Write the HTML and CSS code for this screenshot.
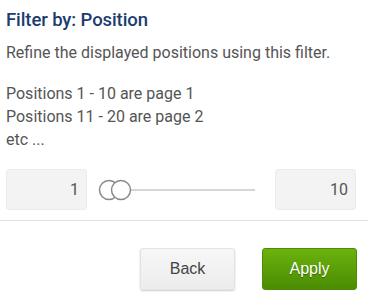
FILE: index.html
```html
<!DOCTYPE html>
<html>
<head>
<meta charset="utf-8">
<link rel="stylesheet" href="styles.css">
</head>
<body>
<div class="panel">
  <div class="content">
    <h2 class="title">Filter by: Position</h2>
    <p class="desc">Refine the displayed positions using this filter.</p>
    <p class="info">Positions 1 - 10 are page 1<br>Positions 11 - 20 are page 2<br>etc ...</p>
    <div class="range-row">
      <div class="num-box">1</div>
      <div class="slider">
        <svg width="160" height="26" viewBox="0 0 160 26">
          <line x1="30" y1="13" x2="158" y2="13" stroke="#c8c8c8" stroke-width="1.5"/>
          <circle cx="12" cy="13" r="9.5" fill="#fff" stroke="#8a8a8a" stroke-width="1.5"/>
          <circle cx="24" cy="13" r="9.5" fill="#fff" stroke="#8a8a8a" stroke-width="1.5"/>
        </svg>
      </div>
      <div class="num-box">10</div>
    </div>
  </div>
  <hr class="divider">
  <div class="actions">
    <button class="btn btn-back">Back</button>
    <button class="btn btn-apply">Apply</button>
  </div>
</div>
</body>
</html>
```
FILE: styles.css
```css
html, body {
  margin: 0;
  padding: 0;
  background: #fff;
}
.panel {
  width: 368px;
  height: 296px;
  overflow: hidden;
}
.content {
  padding: 8px 12px 0 6px;
}
.title {
  margin: 0;
  font-family: Roboto, "Liberation Sans", sans-serif;
  font-weight: 500;
  font-size: 18.5px;
  line-height: 24px;
  letter-spacing: -0.1px;
  color: #1c3d6e;
}
.desc, .info {
  font-family: Roboto, "Liberation Sans", sans-serif;
  font-size: 16px;
  line-height: 23px;
  color: #555;
  margin: 0;
}
.desc {
  margin-top: 9px;
}
.info {
  margin-top: 18px;
}
.range-row {
  display: flex;
  align-items: center;
  margin-top: 18px;
  height: 41px;
}
.num-box {
  width: 81px;
  height: 41px;
  box-sizing: border-box;
  background: #f3f3f3;
  border: 1px solid #ececec;
  border-radius: 3px;
  font-family: Roboto, "Liberation Sans", sans-serif;
  font-size: 16px;
  color: #555;
  text-align: right;
  line-height: 39px;
  padding-right: 7px;
}
.slider {
  flex: 1;
  display: flex;
  align-items: center;
  padding-left: 10px;
}
.slider svg {
  display: block;
}
.divider {
  margin: 10px 0 0 0;
  border: 0;
  border-top: 1px solid #e0e0e0;
  height: 0;
}
.actions {
  display: flex;
  justify-content: flex-end;
  gap: 27px;
  padding: 27px 11px 0 0;
}
.btn {
  width: 95px;
  height: 42px;
  border-radius: 3px;
  font-family: "Liberation Sans", Arial, sans-serif;
  font-size: 16px;
  cursor: pointer;
}
.btn-back {
  background: linear-gradient(#f7f7f7, #ececec);
  border: 1px solid #e2e2e2;
  color: #444;
  box-shadow: 0 1px 2px rgba(0,0,0,0.2);
}
.btn-apply {
  background: linear-gradient(#6cb20e, #4a8c02);
  border: 1px solid #4d8a06;
  color: #fff;
  text-shadow: 0 1px 1px rgba(0,0,0,0.35);
}
```
